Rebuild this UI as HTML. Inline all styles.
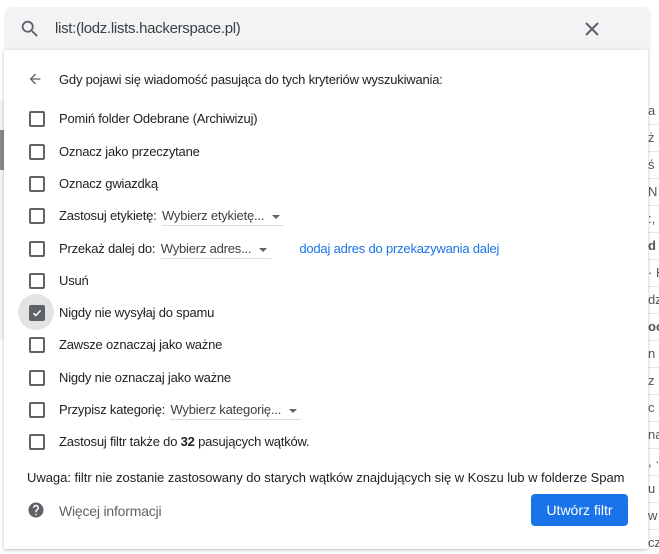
<!DOCTYPE html><html><head><meta charset="utf-8"><style>
html,body{margin:0;width:659px;height:554px;overflow:hidden}
body{background:#fff;font-family:"Liberation Sans",sans-serif;position:relative;color:#202124}
.bg{position:absolute;left:648px;top:98px;width:11px;height:450px;overflow:hidden}
.bg div{height:26px;border-bottom:1px solid #e6e6e6;font-size:13px;color:#555;line-height:26px;white-space:nowrap;overflow:hidden}
.search{position:absolute;left:4px;top:7px;width:647px;height:44px;background:#f1f3f4;border-radius:8px 8px 0 0}
.search .t{position:absolute;left:51px;top:13px;font-size:15px;color:#3c4043;letter-spacing:-0.3px}
.pop{position:absolute;left:4px;top:50px;width:644px;height:499px;background:#fff;box-shadow:0 1px 3px rgba(60,64,67,.35)}
.row{position:absolute;left:0;height:20px;font-size:13px;line-height:20px;white-space:nowrap}
.cb{position:absolute;left:25px;width:12px;height:12px;border:2px solid #5f6368;border-radius:2px;top:3px}
.lbl{position:absolute;left:55px;top:1px;letter-spacing:-0.2px}
.sel{display:inline-block;border-bottom:1px solid #dadce0;color:#3c4043;padding-right:4px;margin-left:2px;line-height:19px}
.sel:after{content:"";display:inline-block;border:4px solid transparent;border-top:4px solid #5f6368;border-bottom:0;margin-left:8px;vertical-align:middle}
a{color:#1a73e8;text-decoration:none}
.btn{position:absolute;left:527px;top:444px;width:97px;height:32px;background:#1a73e8;color:#fff;border-radius:4px;font-size:14px;line-height:32px;text-align:center}
</style></head><body>
<div style="position:absolute;left:0;top:100px;width:4px;height:240px;background:#f1f3f4"></div>
<div style="position:absolute;left:0;top:130px;width:4px;height:40px;background:#888"></div>
<div class="bg"><div>a</div><div>ż</div><div>ś</div><div>N</div><div>:,</div><div><b>d</b></div><div>· H</div><div>dz</div><div><b>oc</b></div><div>n</div><div>z</div><div>c</div><div>na</div><div>, ·</div><div>u</div><div>w</div><div>cz</div></div>
<div class="search">
<svg style="position:absolute;left:15px;top:11px" width="22" height="22" viewBox="0 0 24 24"><path fill="#5f6368" d="M15.5 14h-.79l-.28-.27A6.47 6.47 0 0016 9.5 6.5 6.5 0 109.5 16c1.61 0 3.09-.59 4.23-1.57l.27.28v.79l5 4.99L20.49 19l-4.99-5zm-6 0C7.01 14 5 11.99 5 9.5S7.01 5 9.5 5 14 7.01 14 9.5 11.99 14 9.5 14z"/></svg>
<div class="t">list:(lodz.lists.hackerspace.pl)</div>
<svg style="position:absolute;left:581px;top:15px" width="14" height="14" viewBox="0 0 14 14"><path d="M1 1L13 13M13 1L1 13" stroke="#5f6368" stroke-width="2"/></svg>
</div>
<div class="pop">
<svg style="position:absolute;left:23px;top:21px" width="16" height="16" viewBox="0 0 24 24"><path fill="#5f6368" d="M20 11H7.83l5.59-5.59L12 4l-8 8 8 8 1.41-1.41L7.83 13H20v-2z"/></svg>
<div class="row" style="top:19px"><span class="lbl">Gdy pojawi się wiadomość pasująca do tych kryteriów wyszukiwania:</span></div>
<div class="row" style="top:58px"><span class="cb"></span><span class="lbl">Pomiń folder Odebrane (Archiwizuj)</span></div>
<div class="row" style="top:91px"><span class="cb"></span><span class="lbl">Oznacz jako przeczytane</span></div>
<div class="row" style="top:123px"><span class="cb"></span><span class="lbl">Oznacz gwiazdką</span></div>
<div class="row" style="top:155px"><span class="cb"></span><span class="lbl">Zastosuj etykietę: <span class="sel">Wybierz etykietę...</span></span></div>
<div class="row" style="top:188px"><span class="cb"></span><span class="lbl">Przekaż dalej do: <span class="sel" style="padding-right:4px">Wybierz adres...</span><a style="margin-left:28px">dodaj adres do przekazywania dalej</a></span></div>
<div class="row" style="top:220px"><span class="cb"></span><span class="lbl">Usuń</span></div>
<div style="position:absolute;left:14px;top:244px;width:36px;height:36px;border-radius:50%;background:#e3e3e3"></div>
<div class="row" style="top:252px"><span class="cb" style="background:#5f6368"><svg width="12" height="12" viewBox="0 0 12 12" style="position:absolute;left:0;top:0"><path d="M2.5 6.2l2.3 2.3 4.8-5" stroke="#fff" stroke-width="1.5" fill="none"/></svg></span><span class="lbl">Nigdy nie wysyłaj do spamu</span></div>
<div class="row" style="top:284px"><span class="cb"></span><span class="lbl">Zawsze oznaczaj jako ważne</span></div>
<div class="row" style="top:317px"><span class="cb"></span><span class="lbl">Nigdy nie oznaczaj jako ważne</span></div>
<div class="row" style="top:349px"><span class="cb"></span><span class="lbl">Przypisz kategorię: <span class="sel">Wybierz kategorię...</span></span></div>
<div class="row" style="top:381px"><span class="cb"></span><span class="lbl">Zastosuj filtr także do <b>32</b> pasujących wątków.</span></div>
<div class="row" style="top:418px;left:23px;letter-spacing:-0.03px">Uwaga: filtr nie zostanie zastosowany do starych wątków znajdujących się w Koszu lub w folderze Spam</div>
<svg style="position:absolute;left:23px;top:451px" width="18" height="18" viewBox="0 0 24 24"><path fill="#5f6368" d="M12 2C6.48 2 2 6.480 2 12s4.48 10 10 10 10-4.48 10-10S17.52 2 12 2zm1 17h-2v-2h2v2zm2.07-7.750l-.9.92C13.45 12.9 13 13.5 13 15h-2v-.5c0-1.1.45-2.1 1.17-2.83l1.24-1.26c.37-.36.59-.86.59-1.41 0-1.1-.9-2-2-2s-2 .9-2 2H8c0-2.21 1.79-4 4-4s4 1.79 4 4c0 .88-.36 1.68-.93 2.25z"/></svg>
<div class="row" style="top:450px"><span class="lbl" style="color:#5f6368;font-size:14px">Więcej informacji</span></div>
<div class="btn">Utwórz filtr</div>
</div>
</body></html>
